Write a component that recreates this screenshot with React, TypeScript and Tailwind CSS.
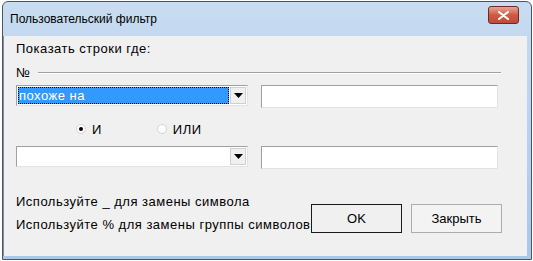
import { useState } from 'react';

const font = { fontFamily: '"Liberation Sans", Arial, sans-serif' };

const DropArrow = () => (
  <div className="flex h-full w-[16px] items-center justify-center border border-[#d0d0d0] bg-[#f0f0f0]">
    <svg width="9" height="5" viewBox="0 0 9 5">
      <path d="M0 0h9L4.5 5z" fill="#000" />
    </svg>
  </div>
);

const Combo = ({ value, focused }: { value: string; focused?: boolean }) => (
  <div className="flex h-[21px] w-[232px] border border-t-[#a0a0a0] border-l-[#a0a0a0] border-r-[#e3e3e3] border-b-[#e3e3e3] bg-white p-[1px]">
    <div className="flex flex-1 items-center pr-[1px]">
      {focused ? (
        <div className="flex h-full flex-1 items-center border border-dotted border-black bg-[#3399ff] text-[13px] leading-none tracking-[0.5px] text-white">
          {value}
        </div>
      ) : (
        <div className="h-full flex-1" />
      )}
    </div>
    <DropArrow />
  </div>
);

const TextBox = () => (
  <input
    className="h-[23px] w-[237px] border border-t-[#a0a0a0] border-l-[#a0a0a0] border-r-[#e3e3e3] border-b-[#e3e3e3] bg-white outline-none"
    defaultValue=""
  />
);

const Radio = ({ label, checked, onClick }: { label: string; checked: boolean; onClick: () => void }) => (
  <button onClick={onClick} className="flex items-center gap-[6px] text-[13px] leading-none tracking-[0.5px]">
    <span className="flex h-[10px] w-[10px] items-center justify-center rounded-full border border-[#d4d4d4] bg-white">
      {checked && <span className="h-[4px] w-[4px] rounded-full bg-black" />}
    </span>
    {label}
  </button>
);

const App = () => {
  const [mode, setMode] = useState<'and' | 'or'>('and');
  return (
    <div className="h-[261px] w-[533px] bg-white pl-[2px] pt-[1px]" style={font}>
      <div className="flex h-[259px] w-[530px] flex-col rounded-t-[6px] border border-[#4a5563] bg-gradient-to-b from-[#c8dcf1] to-[#a9c7e8]">
        <div className="flex h-[34px] items-center justify-between pl-[7px] pr-[12px]">
          <span className="text-[12px] text-black">Пользовательский фильтр</span>
          <button className="mt-[-8px] flex h-[18px] w-[31px] items-center justify-center rounded-[3px] border border-[#6d2a22] bg-gradient-to-b from-[#e8a493] via-[#cf5a44] to-[#c14a35]">
            <svg width="11" height="9" viewBox="0 0 11 9">
              <path d="M1 1l9 7M10 1L1 8" stroke="#fff" strokeWidth="2.2" strokeLinecap="round" />
            </svg>
          </button>
        </div>
        <div className="mb-[3px] mr-[4px] flex flex-1 flex-col border-l border-[#7f8fa3] bg-[#f0f0f0] pl-[12px] text-black tracking-[0.5px]">
          <div className="mt-[5px] h-[16px] text-[13px] leading-[16px]">Показать строки где:</div>
          <div className="mt-[8px] flex h-[16px] items-center gap-[8px] text-[13px]">
            <span>№</span>
            <div className="mr-[26px] h-0 flex-1 border-t border-b border-t-[#a0a0a0] border-b-white" />
          </div>
          <div className="mt-[4px] flex items-start gap-[13px]">
            <Combo value="похоже на" focused />
            <TextBox />
          </div>
          <div className="mt-[16px] flex h-[10px] items-center">
            <div className="ml-[60px]">
              <Radio label="И" checked={mode === 'and'} onClick={() => setMode('and')} />
            </div>
            <div className="ml-[55px]">
              <Radio label="ИЛИ" checked={mode === 'or'} onClick={() => setMode('or')} />
            </div>
          </div>
          <div className="mt-[12px] flex items-start gap-[13px]">
            <Combo value="" />
            <TextBox />
          </div>
          <div className="mt-[21px] flex">
            <div className="w-[295px] overflow-hidden whitespace-nowrap text-[13px] leading-[23px]">
              <div>Используйте _ для замены символа</div>
              <div>Используйте % для замены группы символов</div>
            </div>
            <div className="mt-[14px] flex h-[29px] gap-[9px] tracking-normal">
              <button className="h-[29px] w-[91px] border border-[#1a1a1a] bg-[#f0f0f0] text-[13px]">OK</button>
              <button className="h-[29px] w-[91px] border border-[#adadad] bg-[#f3f3f3] text-[13px]">Закрыть</button>
            </div>
          </div>
        </div>
      </div>
    </div>
  );
};

export default App;
